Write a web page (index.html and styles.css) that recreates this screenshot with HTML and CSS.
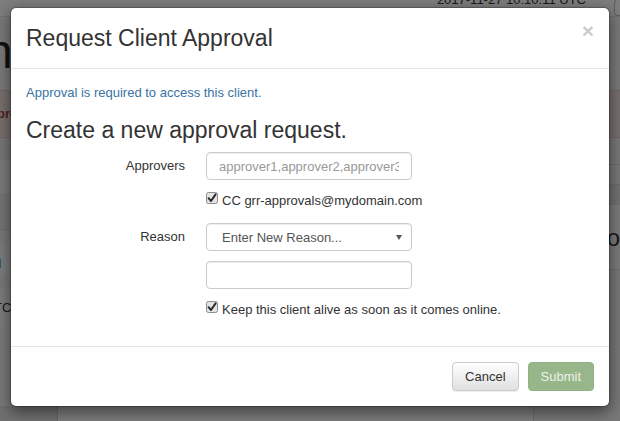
FILE: index.html
```html
<!DOCTYPE html>
<html>
<head>
<meta charset="utf-8">
<title>Request Client Approval</title>
<link rel="stylesheet" href="styles.css">
</head>
<body>
<div class="page">
  <header class="topbar">
    <span class="stamp">2017-11-27 10:10:11 UTC</span>
    <span class="topbtn"></span>
  </header>
  <div class="titlebar"><h1 class="pagetitle">n</h1></div>
  <div class="alert"><strong>pro</strong></div>
  <div class="content">
    <div class="maincol">
      <div class="band b1"></div>
      <div class="band b2"></div>
      <div class="band b3"></div>
      <div class="line-text link">d</div>
      <div class="line-text tc">TC</div>
      <div class="filler"></div>
      <div class="bottom-row"><div class="gutter"></div><div class="panel"></div></div>
    </div>
    <div class="sidecol">
      <div class="band s1"></div>
      <div class="band s2"></div>
      <div class="band s3"></div>
      <div class="side-head">Info</div>
      <div class="side-row"><strong>Owner</strong></div>
    </div>
  </div>
</div>

<div class="backdrop"></div>

<div class="modal">
  <div class="modal-header">
    <h3 class="modal-title">Request Client Approval</h3>
    <button class="close" type="button">&times;</button>
  </div>
  <div class="modal-body">
    <p class="notice">Approval is required to access this client.</p>
    <h3 class="subhead">Create a new approval request.</h3>
    <form class="form">
      <div class="form-row r-approvers">
        <label class="lbl">Approvers</label>
        <input class="field" type="text" placeholder="approver1,approver2,approver3">
      </div>
      <div class="form-row r-cc">
        <span></span>
        <label class="check">
          <svg class="cb" width="12" height="12" viewBox="0 0 12 12"><rect x="0.5" y="0.5" width="11" height="11" rx="2" fill="#e4e4e4" stroke="#8c8c8c"/><path d="M2.6 6.2 L5 9 L9.6 2.4" fill="none" stroke="#2b2b2b" stroke-width="2" stroke-linecap="round" stroke-linejoin="round"/></svg>
          <span>CC grr-approvals@mydomain.com</span>
        </label>
      </div>
      <div class="form-row r-reason">
        <label class="lbl">Reason</label>
        <div class="select-wrap">
          <select class="field select"><option>Enter New Reason...</option></select>
          <span class="caret"></span>
        </div>
      </div>
      <div class="form-row r-reason-text">
        <span></span>
        <input class="field" type="text">
      </div>
      <div class="form-row r-keep">
        <span></span>
        <label class="check">
          <svg class="cb" width="12" height="12" viewBox="0 0 12 12"><rect x="0.5" y="0.5" width="11" height="11" rx="2" fill="#e4e4e4" stroke="#8c8c8c"/><path d="M2.6 6.2 L5 9 L9.6 2.4" fill="none" stroke="#2b2b2b" stroke-width="2" stroke-linecap="round" stroke-linejoin="round"/></svg>
          <span>Keep this client alive as soon as it comes online.</span>
        </label>
      </div>
    </form>
  </div>
  <div class="modal-footer">
    <button class="btn btn-default" type="button">Cancel</button>
    <button class="btn btn-success" type="button" disabled>Submit</button>
  </div>
</div>
</body>
</html>
```

FILE: styles.css
```css
* { box-sizing: border-box; }
html, body { margin: 0; padding: 0; }
body {
  width: 620px;
  height: 421px;
  overflow: hidden;
  position: relative;
  font-family: "Liberation Sans", Arial, sans-serif;
  font-size: 13px;
  color: #333;
  background: #f2f2f2;
}

/* ---------- underlying page ---------- */
.page { width: 620px; height: 421px; display: flex; flex-direction: column; overflow: hidden; }
.topbar {
  height: 17px;
  flex: none;
  background: #fbfbfb;
  border-bottom: 1px solid #e2e2e2;
  display: flex;
  justify-content: flex-end;
  align-items: flex-start;
}
.stamp { font-size: 13px; line-height: 13px; margin-top: -7px; margin-right: 28px; color: #333; }
.topbar .topbtn {
  width: 6px; height: 17px; margin-top: -1px;
  border: 1px solid #bbb; border-right: none; border-radius: 4px 0 0 4px; background: #fff;
}
.titlebar { height: 73px; flex: none; background: #f4f4f4; }
.pagetitle { margin: 0 0 0 -14px; font-size: 48px; line-height: 56px; font-weight: normal; padding-top: 7px; color: #222; }
.alert {
  height: 48px; flex: none;
  background: #f2dede;
  border-top: 1px solid #ebccd1;
  border-bottom: 1px solid #ebccd1;
  color: #a94442;
  line-height: 46px;
  margin-left: -3px;
}
.content { flex: 1; display: flex; min-height: 0; }
.maincol { width: 565px; display: flex; flex-direction: column; border-right: 1px solid #d6d6d6; }
.sidecol { flex: 1; display: flex; flex-direction: column; background: #f3f3f3; }
.band { flex: none; }
.b1 { height: 22px; background: #eeeeee; }
.b2 { height: 35px; background: #f9f9f9; border-bottom: 1px solid #e5e5e5; }
.b3 { height: 35px; background: #ececec; border-bottom: 1px solid #dcdcdc; }
.line-text { flex: none; height: 32px; line-height: 40px; margin-left: -6px; color: #333; background: #fafafa; }
.line-text.link { color: #23527c; margin-top: 14px; }
.line-text.tc { margin-top: 12px; height: 40px; }
.filler { flex: 1; background: #f7f7f7; }
.bottom-row { height: 15px; flex: none; display: flex; }
.gutter { width: 58px; background: #e3e3e3; border-right: 1px solid #d0d0d0; }
.panel { flex: 1; background: #fbfbfb; }
.s1 { height: 27px; border-bottom: 1px solid #dcdcdc; }
.s2 { height: 20px; border-bottom: 1px solid #dcdcdc; }
.s3 { height: 20px; background: #e6e6e6; }
.side-head { flex: none; height: 65px; font-size: 24px; line-height: 65px; padding-left: 46px; background: #fafafa; border-bottom: 1px solid #dedede; white-space: nowrap; }
.side-row { padding-left: 26px; line-height: 20px; margin-top: 25px; white-space: nowrap; color: #333; }

/* ---------- backdrop ---------- */
.backdrop { position: absolute; inset: 0; background: rgba(0, 0, 0, 0.5); }

/* ---------- modal ---------- */
.modal {
  position: absolute;
  left: 10px;
  top: 7px;
  width: 600px;
  background: #fff;
  background-clip: padding-box;
  border: 1px solid rgba(0, 0, 0, 0.2);
  border-radius: 6px;
  box-shadow: 0 5px 15px rgba(0, 0, 0, 0.5);
}
.modal-header {
  padding: 15px;
  border-bottom: 1px solid #e5e5e5;
  display: flex;
  justify-content: space-between;
  align-items: flex-start;
}
.modal-title { margin: 0; font-size: 23px; line-height: 30px; font-weight: normal; color: #333; }
.close {
  margin-top: -3px;
  padding: 0;
  border: 0;
  background: transparent;
  font-family: "Liberation Sans", Arial, sans-serif;
  font-size: 21px;
  font-weight: bold;
  line-height: 21px;
  color: #000;
  opacity: 0.2;
  text-shadow: 0 1px 0 #fff;
}
.modal-body { padding: 15px 15px 27px; }
.notice { margin: 0; line-height: 18px; color: #3a72a4; }
.subhead { margin: 15px 0 0; font-size: 23px; line-height: 26px; font-weight: normal; color: #333; }

.form { margin: 9px 0 0; display: flex; flex-direction: column; }
.form-row {
  display: grid;
  grid-template-columns: 159px 1fr;
  column-gap: 21px;
  align-items: center;
}
.r-cc { margin-top: 12px; }
.r-reason { margin-top: 13px; }
.r-reason-text { margin-top: 10px; }
.r-keep { margin-top: 12px; }
.lbl { text-align: right; line-height: 18px; color: #333; }

.field {
  width: 206px;
  height: 28px;
  padding: 0 12px;
  border: 1px solid #ccc;
  border-radius: 4px;
  box-shadow: inset 0 1px 1px rgba(0, 0, 0, 0.075);
  font-family: "Liberation Sans", Arial, sans-serif;
  font-size: 13px;
  color: #555;
  background: #fff;
}
.field::placeholder { color: #999; opacity: 1; }
.select-wrap { position: relative; width: 206px; height: 28px; }
.select {
  appearance: none;
  -webkit-appearance: none;
  padding-left: 15px;
  display: block;
}
.caret {
  position: absolute;
  right: 10px;
  top: 12px;
  width: 0;
  height: 0;
  border-left: 3px solid transparent;
  border-right: 3px solid transparent;
  border-top: 5px solid #555;
}

.check { display: flex; align-items: flex-start; gap: 4px; line-height: 18px; color: #333; white-space: nowrap; }
.cb { flex: none; display: block; margin-top: 0; }

.modal-footer {
  padding: 15px;
  border-top: 1px solid #e5e5e5;
  display: flex;
  justify-content: flex-end;
  gap: 9px;
}
.btn {
  height: 29px;
  padding: 0 12px;
  border: 1px solid transparent;
  border-radius: 4px;
  font-family: "Liberation Sans", Arial, sans-serif;
  font-size: 13px;
  line-height: 27px;
}
.btn-default {
  color: #333;
  background: linear-gradient(#ffffff, #e0e0e0);
  border-color: #ccc;
  box-shadow: inset 0 1px 0 rgba(255, 255, 255, 0.15), 0 1px 1px rgba(0, 0, 0, 0.075);
}
.btn-success {
  color: #ecf2e9;
  background: #97b689;
  border-color: #91b083;
}
```
